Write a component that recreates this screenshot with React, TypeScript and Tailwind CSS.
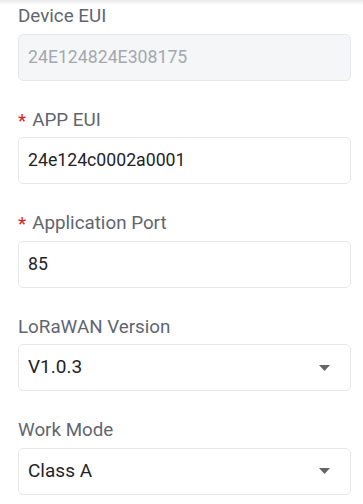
const font = { fontFamily: 'Roboto, "Noto Sans", sans-serif' }

function Label({ text, required }: { text: string; required?: boolean }) {
  return (
    <div className="flex items-center h-[33.5px] text-[18.8px] text-[#5f6670] leading-none">
      {required && <span className="text-[#e02020] mr-[6px] text-[19px]">*</span>}
      <span>{text}</span>
    </div>
  )
}

function Field({ value, disabled }: { value: string; disabled?: boolean }) {
  return (
    <div
      className={`h-[47px] rounded-[5px] border border-[#e6e8eb] flex items-center px-[9px] text-[17.7px] ${
        disabled ? 'bg-[#f5f6f8] text-[#a4a8ae]' : 'bg-white text-[#1f2329]'
      }`}
    >
      {value}
    </div>
  )
}

function Select({ value }: { value: string }) {
  return (
    <div className="h-[47px] rounded-[5px] border border-[#e6e8eb] flex items-center justify-between pl-[9px] pr-[20px] text-[19px] text-[#1f2329] bg-white">
      <span>{value}</span>
      <svg width="11" height="6" viewBox="0 0 11 6">
        <path d="M0 0 L11 0 L5.5 6 Z" fill="#666" />
      </svg>
    </div>
  )
}

export default function App() {
  return (
    <div className="w-[363px] h-[504px] overflow-hidden bg-white relative" style={font}>
      <div className="absolute top-0 left-0 right-0 h-[5px] bg-gradient-to-b from-[#e9e9e9] to-white" />
      <div className="pl-[18px] pr-[12px] flex flex-col">
        <Label text="Device EUI" />
        <Field value="24E124824E308175" disabled />
        <div className="h-[23px]" />
        <Label text="APP EUI" required />
        <Field value="24e124c0002a0001" />
        <div className="h-[23px]" />
        <Label text="Application Port" required />
        <Field value="85" />
        <div className="h-[23px]" />
        <Label text="LoRaWAN Version" />
        <Select value="V1.0.3" />
        <div className="h-[23px]" />
        <Label text="Work Mode" />
        <Select value="Class A" />
      </div>
    </div>
  )
}
